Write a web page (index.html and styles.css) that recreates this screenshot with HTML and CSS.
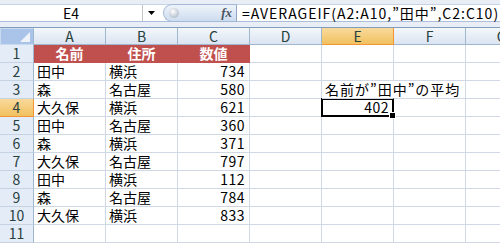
FILE: index.html
```html
<!DOCTYPE html>
<html lang="ja">
<head>
    <meta charset="UTF-8">
    <title>AVERAGEIF</title>
    <link rel="stylesheet" href="styles.css">
</head>
<body>
    <div class="barra">
        <div class="linha">
            <div class="nome">E4</div>
            <div class="seta"><svg width="7" height="4" viewBox="0 0 7 4"><path d="M0 0h7L3.5 4z" fill="#000"/></svg></div>
            <div class="fx-btn">
                <span class="bola"></span>
                <span class="fx">fx</span>
            </div>
            <div class="formula">=AVERAGEIF(A2:A10,”田中”,C2:C10)</div>
        </div>
    </div>

    <div class="planilha">
        <div class="canto"></div>
        <div class="col">A</div>
        <div class="col">B</div>
        <div class="col">C</div>
        <div class="col">D</div>
        <div class="col sel">E</div>
        <div class="col">F</div>
        <div class="col">G</div>

        <div class="lin">1</div>
        <div class="c titulo">名前</div>
        <div class="c titulo">住所</div>
        <div class="c titulo">数値</div>
        <div class="c"></div><div class="c"></div><div class="c"></div><div class="c"></div>

        <div class="lin">2</div>
        <div class="c">田中</div><div class="c">横浜</div><div class="c num">734</div>
        <div class="c"></div><div class="c"></div><div class="c"></div><div class="c"></div>

        <div class="lin">3</div>
        <div class="c">森</div><div class="c">名古屋</div><div class="c num">580</div>
        <div class="c"></div><div class="c vaza">名前が”田中”の平均</div><div class="c"></div><div class="c"></div>

        <div class="lin sel">4</div>
        <div class="c">大久保</div><div class="c">横浜</div><div class="c num">621</div>
        <div class="c"></div><div class="c num ativa">402</div><div class="c"></div><div class="c"></div>

        <div class="lin">5</div>
        <div class="c">田中</div><div class="c">名古屋</div><div class="c num">360</div>
        <div class="c"></div><div class="c"></div><div class="c"></div><div class="c"></div>

        <div class="lin">6</div>
        <div class="c">森</div><div class="c">横浜</div><div class="c num">371</div>
        <div class="c"></div><div class="c"></div><div class="c"></div><div class="c"></div>

        <div class="lin">7</div>
        <div class="c">大久保</div><div class="c">名古屋</div><div class="c num">797</div>
        <div class="c"></div><div class="c"></div><div class="c"></div><div class="c"></div>

        <div class="lin">8</div>
        <div class="c">田中</div><div class="c">横浜</div><div class="c num">112</div>
        <div class="c"></div><div class="c"></div><div class="c"></div><div class="c"></div>

        <div class="lin">9</div>
        <div class="c">森</div><div class="c">名古屋</div><div class="c num">784</div>
        <div class="c"></div><div class="c"></div><div class="c"></div><div class="c"></div>

        <div class="lin">10</div>
        <div class="c">大久保</div><div class="c">横浜</div><div class="c num">833</div>
        <div class="c"></div><div class="c"></div><div class="c"></div><div class="c"></div>

        <div class="lin">11</div>
        <div class="c"></div><div class="c"></div><div class="c"></div>
        <div class="c"></div><div class="c"></div><div class="c"></div><div class="c"></div>
    </div>
</body>
</html>
```

FILE: styles.css
```css
* {
    box-sizing: border-box;
    margin: 0;
    padding: 0;
}

body {
    width: 500px;
    height: 244px;
    overflow: hidden;
    background: #fff;
    font-family: "Noto Sans CJK JP", sans-serif;
    font-size: 14px;
    color: #000;
}

/* barra de fórmulas */
.barra {
    height: 28px;
    padding-top: 4px;
    background: #e9eef6;
    border-bottom: 1px solid #7f9cbd;
}

.linha {
    display: flex;
    height: 18px;
    background: #fff;
    border-top: 1px solid #c5d3e6;
    border-bottom: 1px solid #a9bfdb;
}

.nome {
    width: 143px;
    text-align: center;
    line-height: 16px;
    border-right: 1px solid #c4c4c4;
}

.seta {
    width: 20px;
    display: flex;
    align-items: center;
    justify-content: center;
    padding-right: 4px;
}

.fx-btn {
    width: 74px;
    display: flex;
    align-items: center;
    justify-content: space-between;
    padding: 0 4px 0 5px;
    border: 1px solid #a4b9d6;
    border-right-color: #8fa8c8;
    border-radius: 9px 0 0 9px;
    margin-top: -1px;
    height: 18px;
    background: linear-gradient(#eef3fa, #cddcef);
}

.bola {
    width: 10px;
    height: 10px;
    border-radius: 50%;
    background: radial-gradient(circle at 40% 35%, #fff, #b9c3cf 70%, #9aa6b4);
}

.fx {
    font-family: "Liberation Serif", serif;
    font-style: italic;
    font-weight: bold;
    font-size: 13px;
    color: #4b5563;
    line-height: 16px;
}

.formula {
    padding-left: 5px;
    line-height: 16px;
    letter-spacing: 1px;
    white-space: nowrap;
}

/* grade */
.planilha {
    display: grid;
    grid-template-columns: 34px repeat(7, 72px);
    grid-template-rows: 17px;
    grid-auto-rows: 18px;
}

.canto {
    position: relative;
    background: #a9c4e8;
    border: 1px solid #c9daf0;
    border-right-color: #9eb6ce;
}

.canto::after {
    content: '';
    position: absolute;
    right: 3px;
    bottom: 2px;
    border-left: 10px solid transparent;
    border-bottom: 10px solid #eef3fa;
}

.col {
    text-align: center;
    line-height: 16px;
    color: #27413e;
    background: linear-gradient(#f4f7fb, #dbe4f1);
    border-right: 1px solid #9eb6ce;
    border-bottom: 1px solid #9eb6ce;
}

.lin {
    text-align: center;
    line-height: 17px;
    color: #27413e;
    background: #e4ecf7;
    border-right: 1px solid #9eb6ce;
    border-bottom: 1px solid #c5d3e3;
}

.col.sel,
.lin.sel {
    background: linear-gradient(#f9d99c, #f1c15f);
    border-color: #f29536;
}

.c {
    padding: 0 3px;
    line-height: 17px;
    white-space: nowrap;
    border-right: 1px solid #d0d7e5;
    border-bottom: 1px solid #d0d7e5;
}

.num {
    text-align: right;
    padding-right: 4px;
    letter-spacing: 0.5px;
}

.titulo {
    background: #c0504d;
    color: #fff;
    font-weight: bold;
    text-align: center;
    border-color: #c0504d;
}

.vaza {
    overflow: visible;
    letter-spacing: 1px;
    border-right-color: transparent;
    position: relative;
    z-index: 1;
}

.ativa {
    position: relative;
}

.ativa::before {
    content: '';
    position: absolute;
    left: -1px;
    top: -1px;
    right: -1px;
    bottom: -1px;
    border: 2px solid #000;
}

.ativa::after {
    content: '';
    position: absolute;
    right: -3px;
    bottom: -3px;
    width: 5px;
    height: 5px;
    background: #000;
    border: 1px solid #fff;
    box-sizing: content-box;
}
```
